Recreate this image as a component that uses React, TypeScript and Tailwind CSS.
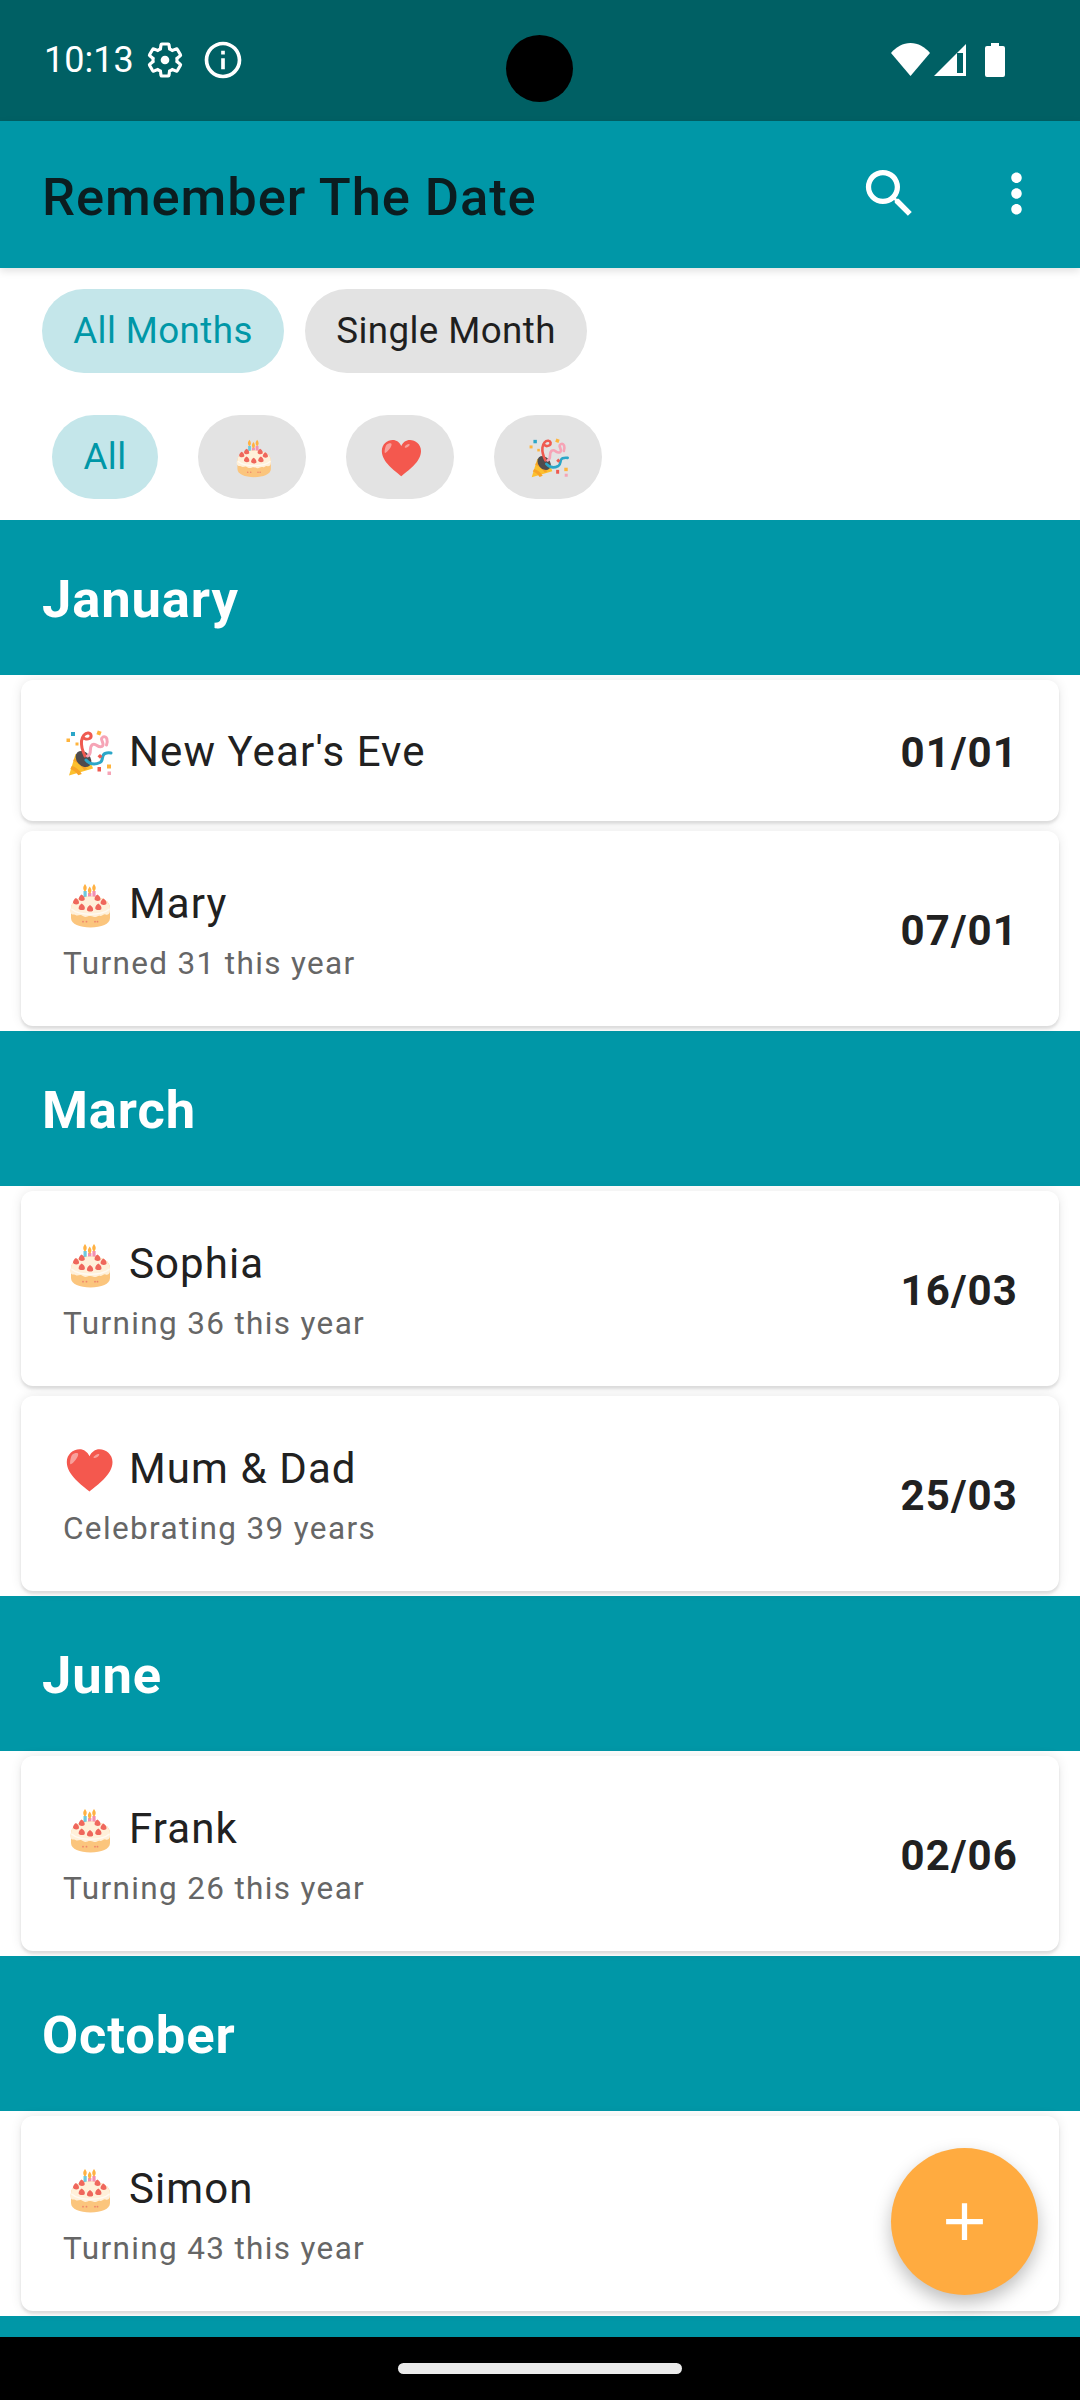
import { MdAdd, MdInfoOutline, MdMoreVert, MdSearch } from "react-icons/md";

type Kind = "cake" | "heart" | "party";

interface Entry {
  kind: Kind;
  name: string;
  note?: string;
  date: string;
}

const months: { title: string; entries: Entry[] }[] = [
  {
    title: "January",
    entries: [
      { kind: "party", name: "New Year's Eve", date: "01/01" },
      { kind: "cake", name: "Mary", note: "Turned 31 this year", date: "07/01" },
    ],
  },
  {
    title: "March",
    entries: [
      { kind: "cake", name: "Sophia", note: "Turning 36 this year", date: "16/03" },
      { kind: "heart", name: "Mum & Dad", note: "Celebrating 39 years", date: "25/03" },
    ],
  },
  {
    title: "June",
    entries: [{ kind: "cake", name: "Frank", note: "Turning 26 this year", date: "02/06" }],
  },
  {
    title: "October",
    entries: [{ kind: "cake", name: "Simon", note: "Turning 43 this year", date: "17/10" }],
  },
];

function CakeIcon({ size }: { size: number }) {
  return (
    <svg className="shrink-0" width={size} height={size} viewBox="0 -3 56 56">
      {/* candles */}
      <rect x="23.5" y="12" width="3.2" height="12" fill="#6fc9de" />
      <rect x="28" y="14" width="3.4" height="13" fill="#f48fb1" />
      <rect x="32.4" y="12" width="3.2" height="12" fill="#f48fb1" />
      <path d="M25 5c2 2.5 2.6 5 0 7.6-2.6-2.6-2-5 0-7.6zM29.7 7.5c2 2.5 2.6 5 0 7.6-2.6-2.6-2-5 0-7.6zM34 5c2 2.5 2.6 5 0 7.6-2.6-2.6-2-5 0-7.6z" fill="#ffb142" />
      {/* sponge and icing */}
      <path d="M11 29c0-7 8.700-11.500 19.500-11.500S50 22 50 29v10c0 6-8.700 9.500-19.500 9.500S11 45 11 39z" fill="#fbc57d" />
      <path d="M11 29c0-7 8.700-11.500 19.500-11.500S50 22 50 29v3c0 3-2.500 4.500-4.500 3.500-2-.800-3 2.200-5.500 1.300-2-.800-3.500 1.800-6 1.200-2.500-.800-4-1.500-6.500-.500-2.500 1-4.500-.200-6-1.200-2.200-1-3.800 1.200-6-.300-1.800-1-3 0-4-1-1-1-1.500-2.500-1.500-4z" fill="#fff0d9" />
      <path d="M11.500 30c8 7 30 7 38 0" fill="none" stroke="#fffaf2" strokeWidth="1.500" />
      {/* strawberries */}
      <path d="M16 19c2.200 1.400 3.500 3.400 2.900 5.500-2 1.500-5 1-5.900-.800 0-2 1.300-3.700 3-4.700zM21.700 15.500c2.200 1.400 3.500 3.400 2.900 5.500-2 1.500-5 1-5.900-.800 0-2 1.300-3.700 3-4.700zM37.500 15.500c2.200 1.400 3.500 3.400 2.900 5.500-2 1.500-5 1-5.900-.800 0-2 1.300-3.700 3-4.700zM43.500 19.500c2.200 1.400 3.500 3.400 2.900 5.500-2 1.500-5 1-5.900-.800 0-2 1.300-3.700 3-4.700zM21.700 24.500c2.300 1.500 3.700 3.500 3 5.700-2 1.500-5.200 1-6.100-.800 0-2.100 1.300-3.800 3.100-4.900zM30 26c2.300 1.500 3.700 3.500 3 5.700-2 1.500-5.200 1-6.100-.800 0-2.100 1.300-3.800 3.100-4.900zM38.300 24.500c2.300 1.500 3.700 3.500 3 5.700-2 1.500-5.200 1-6.100-.800 0-2.100 1.300-3.800 3.100-4.900z" fill="#ef675c" />
      <g fill="#f0856a">
        <circle cx="23" cy="42.700" r=".9" />
        <circle cx="26.500" cy="42.700" r=".9" />
        <circle cx="35" cy="42.700" r=".9" />
        <circle cx="37.500" cy="42.700" r=".9" />
      </g>
    </svg>
  );
}

function HeartIcon({ size }: { size: number }) {
  return (
    <svg className="shrink-0" width={size} height={size} viewBox="0 -1 56 56">
      <path d="M29.500 49.500C22 43 6.800 33 6.800 20 6.800 12.500 13 7.300 19.500 7.300c4.500 0 8 2.700 10 7 2-4.300 5.500-7 10-7 6.500 0 13 5.200 13 12.700 0 13-15.500 23-23 29.500z" fill="#f4584e" />
      <path d="M12 13c2-2 5-2.500 6-1.500.800 1-.500 4-2.500 6.500-2 2.500-4.500 5-5.200 4-.600-1 .200-6.500 1.700-9zM33.500 15c1.500-2 4-3.500 5.500-3 1 .500-.500 2.200-2 3.300-1.500 1-3.700 1.200-3.500-.300z" fill="#f8a09a" />
    </svg>
  );
}

function PartyIcon({ size }: { size: number }) {
  return (
    <svg className="shrink-0" width={size} height={size} viewBox="0 -2 56 56">
      {/* popper cone */}
      <path d="M9 49.500 15.500 28c6 .500 16 8 17.500 14.500z" fill="#fcc02e" />
      <path d="M11.800 40c4 1 8 4 10 8l-3.500 1.300c-1.800-2.800-5-5.300-8-6.300zM14.200 32.500c5 1.200 10.500 6 13 10.500l-3 1c-2.500-3.800-7-7.800-11-9z" fill="#f8a327" />
      <ellipse cx="23.500" cy="33" rx="6.800" ry="9" transform="rotate(-42 23.500 33)" fill="#4f4b4d" />
      {/* streamers */}
      <path d="M25 30c-2.500-5-4-10-3.500-15 .500-4.500 3.500-8.500 7-8 3 .500 3.500 4 1 5.500-2.500 1.200-5 .500-6-1" fill="none" stroke="#ef5a50" strokeWidth="3" strokeLinecap="round" />
      <path d="M27.500 30c5.500-2 .500-8.500 5-11.500 4-2 5 4 9.500 2 4-2.500-3.500-7.500 1-9.500 4-1.500 5 3.500 3.500 8" fill="none" stroke="#f6a4b6" strokeWidth="3" strokeLinecap="round" />
      <path d="M26 34c4 4.500 9 5 14 2.500 4-2.200 1-7.500 5-9 2.500-1 4-.800 6-.500" fill="none" stroke="#2ba6c8" strokeWidth="3" strokeLinecap="round" />
      {/* confetti */}
      <rect x="11" y="6" width="4" height="4" fill="#2ba6c8" />
      <rect x="6.500" y="12.500" width="3.500" height="3.500" fill="#ffb43c" />
      <rect x="15.500" y="16.500" width="3" height="3" fill="#ffb43c" />
      <rect x="37" y="5" width="4" height="4" transform="rotate(20 39 7)" fill="#ffb43c" />
      <rect x="38.500" y="28.500" width="3.500" height="3.500" transform="rotate(45 40 30)" fill="#ef5a50" />
      <rect x="37.500" y="41" width="3.500" height="4.500" fill="#ef5a50" />
      <rect x="47" y="38.500" width="4" height="4" fill="#ffb43c" />
      <rect x="47.500" y="45.500" width="3.500" height="3.500" fill="#f6a4b6" />
    </svg>
  );
}

function EventIcon({ kind, size }: { kind: Kind; size: number }) {
  if (kind === "cake") return <CakeIcon size={size} />;
  if (kind === "heart") return <HeartIcon size={size} />;
  return <PartyIcon size={size} />;
}

function StatusBar() {
  return (
    <div className="relative flex h-[121px] shrink-0 items-start bg-[#006064] text-white">
      <span className="ml-[44px] mt-[39px] text-[36px] leading-[42px]">10:13</span>
      <svg className="ml-[11px] mt-[40px]" width="40" height="40" viewBox="0 0 24 24">
        <path
          d="M19.14 12.94c.04-.3.06-.61.06-.94 0-.32-.02-.64-.07-.94l2.03-1.58c.18-.14.23-.41.12-.61l-1.92-3.32c-.12-.22-.37-.29-.59-.22l-2.39.96c-.5-.38-1.03-.7-1.62-.94l-.36-2.54c-.04-.24-.24-.41-.48-.41h-3.84c-.24 0-.43.17-.47.41l-.36 2.54c-.59.24-1.13.57-1.62.94l-2.39-.96c-.22-.08-.47 0-.59.22L2.74 8.87c-.12.21-.08.47.12.61l2.03 1.58c-.05.3-.09.63-.09.94s.02.64.07.94l-2.03 1.58c-.18.14-.23.41-.12.61l1.92 3.32c.12.22.37.29.59.22l2.39-.96c.5.38 1.03.7 1.62.94l.36 2.54c.05.24.24.41.48.41h3.84c.24 0 .44-.17.47-.41l.36-2.54c.59-.24 1.13-.56 1.62-.94l2.39.96c.22.08.47 0 .59-.22l1.92-3.32c.12-.22.07-.47-.12-.61l-2.01-1.58z"
          fill="none"
          stroke="white"
          strokeWidth="1.9"
        />
        <circle cx="12" cy="12" r="2.6" fill="white" />
      </svg>
      <MdInfoOutline className="ml-[16px] mt-[38px]" size={44} />
      {/* camera cutout */}
      <div className="absolute left-[506px] top-[35px] h-[67px] w-[67px] rounded-full bg-black" />
      <div className="ml-auto mr-[75px] mt-[43px] flex items-start">
        <svg width="39" height="33" viewBox="0 0 39 33">
          <path d="M0 10C5 4 12 0 19.5 0S34 4 39 10L19.5 33z" fill="white" />
        </svg>
        <svg className="ml-[4px] mt-[1px]" width="32" height="32" viewBox="0 0 32 32">
          <path d="M32 0v32H0zM23 9v20h6V9z" fill="white" fillRule="evenodd" />
        </svg>
        <svg className="ml-[19px]" width="20" height="34" viewBox="0 0 20 34">
          <path d="M6 0h8v3h4a2 2 0 0 1 2 2v27a2 2 0 0 1-2 2H2a2 2 0 0 1-2-2V5a2 2 0 0 1 2-2h4z" fill="white" />
        </svg>
      </div>
    </div>
  );
}

function AppBar() {
  return (
    <div className="relative z-10 flex h-[147px] shrink-0 items-center bg-[#0097a7] pb-[1px] shadow-[0_3px_8px_rgba(0,0,0,0.12)]">
      <span className="ml-[42px] pt-[6px] text-[52.5px] font-medium leading-none tracking-[0.9px] text-[#0b1d20]">
        Remember The Date
      </span>
      <MdSearch className="ml-auto mb-[1px] text-white" size={63} />
      <MdMoreVert className="ml-[64px] mr-[32px] mb-[1px] text-white" size={63} />
    </div>
  );
}

function Chip({ selected, className, children }: { selected?: boolean; className: string; children: React.ReactNode }) {
  return (
    <div
      className={
        "flex h-[84px] items-center justify-center rounded-full text-[36.75px] tracking-[0.4px] " +
        (selected ? "bg-[#c4e6ea] text-[#0097a7] " : "bg-[#e3e3e3] text-[#1f1f1f] ") +
        className
      }
    >
      {children}
    </div>
  );
}

function Filters() {
  return (
    <div className="flex h-[252px] shrink-0 flex-col bg-white">
      <div className="ml-[42px] mt-[21px] flex gap-[21px]">
        <Chip selected className="w-[242px]">All Months</Chip>
        <Chip className="w-[282px]">Single Month</Chip>
      </div>
      <div className="ml-[52px] mt-[42px] flex gap-[40px]">
        <Chip selected className="w-[106px]">All</Chip>
        <Chip className="w-[108px]"><CakeIcon size={48} /></Chip>
        <Chip className="w-[108px]"><HeartIcon size={48} /></Chip>
        <Chip className="w-[108px]"><PartyIcon size={48} /></Chip>
      </div>
    </div>
  );
}

function EntryCard({ entry }: { entry: Entry }) {
  return (
    <div
      className={
        "mx-[21px] flex items-center rounded-[12px] bg-white pl-[42px] pr-[41px] shadow-[0_3px_3px_rgba(0,0,0,0.1),0_0_12px_rgba(0,0,0,0.09)] " +
        (entry.note ? "h-[195px]" : "h-[141px]")
      }
    >
      <div className={"min-w-0 flex-1 " + (entry.note ? "pt-[6px]" : "pt-[3px]")}>
        <div className="flex h-[50px] items-center">
          <span className="ml-[-3px] flex w-[56px] justify-center">
            <EventIcon kind={entry.kind} size={56} />
          </span>
          <span className="ml-[13px] text-[42px] leading-[50px] tracking-[1.1px] text-[#212121]">{entry.name}</span>
        </div>
        {entry.note && (
          <div className="mt-[15px] text-[31.5px] leading-[40px] tracking-[1.35px] text-[#666666]">{entry.note}</div>
        )}
      </div>
      <span className="pt-[3px] text-[42px] font-bold tracking-[1.1px] text-[#212121]">{entry.date}</span>
    </div>
  );
}

function MonthSection({ title, entries }: { title: string; entries: Entry[] }) {
  return (
    <section>
      <div className="flex h-[155px] items-center bg-[#0097a7] px-[42px] pt-[4px] text-[52.5px] font-bold tracking-[0.9px] text-white">
        {title}
      </div>
      <div className="flex flex-col gap-[10px] py-[5px]">
        {entries.map((entry) => (
          <EntryCard key={entry.name} entry={entry} />
        ))}
      </div>
    </section>
  );
}

export default function App() {
  return (
    <div className="relative flex h-[2400px] w-[1080px] flex-col overflow-hidden bg-white font-['Roboto',sans-serif]">
      <StatusBar />
      <AppBar />
      <Filters />
      <div className="min-h-0 flex-1 overflow-hidden">
        {months.map((month) => (
          <MonthSection key={month.title} title={month.title} entries={month.entries} />
        ))}
        <div className="h-[60px] bg-[#0097a7]" />
      </div>
      <div className="flex h-[63px] shrink-0 items-center justify-center bg-black">
        <div className="h-[11px] w-[284px] rounded-full bg-[#ebebeb]" />
      </div>
      {/* add button floats over the list */}
      <button className="absolute left-[891px] top-[2148px] flex h-[147px] w-[147px] items-center justify-center rounded-full bg-[#ffab40] text-white shadow-[0_8px_18px_rgba(0,0,0,0.26)]">
        <MdAdd size={63} />
      </button>
    </div>
  );
}
